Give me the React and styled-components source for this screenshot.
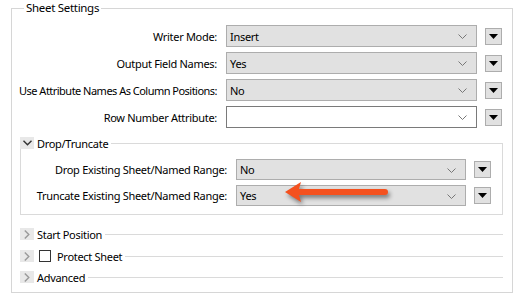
import styled, { createGlobalStyle } from "styled-components";

const GlobalStyle = createGlobalStyle`
  html, body {
    margin: 0;
    padding: 0;
    background: #ffffff;
  }
  body {
    font-family: "Noto Sans", "Open Sans", sans-serif;
    font-size: 11px;
    letter-spacing: -0.3px;
    color: #000;
  }
`;

const Page = styled.div`
  width: 521px;
  height: 299px;
  padding-left: 11px;
  box-sizing: border-box;
`;

const Outer = styled.fieldset`
  width: 502px;
  box-sizing: border-box;
  margin: 0;
  padding: 9px 9px 8px 8px;
  border: 1px solid #d6d6d6;
  min-width: 0;
`;

const Legend = styled.legend`
  padding: 0 2px;
  margin-left: 4px;
  line-height: 16px;
  height: 16px;
  font-size: 11.5px;
`;

const Rows = styled.div`
  display: flex;
  flex-direction: column;
  gap: ${(p) => p.$gap}px;
`;

const Row = styled.div`
  display: grid;
  grid-template-columns: ${(p) => p.$label}px ${(p) => p.$combo}px 17px;
  column-gap: 8px;
  align-items: center;
  height: ${(p) => p.$h}px;
`;

const Label = styled.div`
  display: flex;
  justify-content: flex-end;
  white-space: nowrap;
  margin-right: 1px;
  letter-spacing: ${(p) => (p.$tight ? "-0.52px" : "-0.3px")};
`;

const Combo = styled.div`
  position: relative;
  height: 100%;
  box-sizing: border-box;
  border: 1px solid ${(p) => (p.$empty ? "#7a7a7a" : "#adadad")};
  background: ${(p) => (p.$empty ? "#ffffff" : "#e1e1e1")};
  display: flex;
  align-items: center;
  padding-left: 3px;
  & > svg.chev {
    position: absolute;
    right: 9px;
    top: 50%;
    margin-top: -2px;
  }
`;

const MenuBtn = styled.div`
  width: 17px;
  height: 17px;
  box-sizing: border-box;
  border: 1px solid #adadad;
  background: #e1e1e1;
  display: flex;
  align-items: center;
  justify-content: center;
`;

const Arrow = styled.svg`
  position: absolute;
  left: 44px;
  top: -6px;
  overflow: visible;
  filter: drop-shadow(2px 3px 2px rgba(0, 0, 0, 0.45));
`;

const Header = styled.div`
  display: flex;
  align-items: center;
  height: 14px;
  margin-top: ${(p) => p.$mt}px;
  &::after {
    content: "";
    flex: 1;
    height: 1px;
    background: #dadada;
    margin-left: 3px;
  }
`;

const Toggle = styled.div`
  width: 14px;
  height: 12px;
  background: #e8e8e8;
  display: flex;
  align-items: center;
  justify-content: center;
  margin-right: 3px;
  flex: none;
`;

const Check = styled.div`
  width: 12px;
  height: 12px;
  box-sizing: border-box;
  border: 1px solid #333;
  background: #fff;
  margin: 0 6px 0 2px;
`;

const Group = styled.div`
  position: relative;
`;

const Body = styled.div`
  border: 1px solid #dadada;
  border-top: none;
  margin-top: -7px;
  padding: 16px 0 8px 0;
`;

const ExpandedHeader = styled(Header)`
  position: relative;
  z-index: 1;
`;

const Chevron = () => (
  <svg className="chev" width="9" height="5" viewBox="0 0 9 5">
    <path d="M0.5 0.5 L4.5 4.5 L8.5 0.5" fill="none" stroke="#777" strokeWidth="1" />
  </svg>
);

const Triangle = () => (
  <svg width="9" height="5" viewBox="0 0 9 5">
    <path d="M0 0 H9 L4.5 5 Z" fill="#000" />
  </svg>
);

const Down = () => (
  <svg width="9" height="6" viewBox="0 0 9 6">
    <path d="M0.5 0.8 L4.5 4.8 L8.5 0.8" fill="none" stroke="#333" strokeWidth="1.4" />
  </svg>
);

const Right = () => (
  <svg width="6" height="9" viewBox="0 0 6 9">
    <path d="M0.8 0.5 L4.8 4.5 L0.8 8.5" fill="none" stroke="#9a9a9a" strokeWidth="1.4" />
  </svg>
);

const Field = ({ label, value, empty, inner, tight, children }) => (
  <Row $label={inner ? 207 : 198} $combo={inner ? 230 : 251} $h={inner ? 21 : 22}>
    <Label $tight={tight}>{label}</Label>
    <Combo $empty={empty}>
      {value}
      <Chevron />
      {children}
    </Combo>
    <MenuBtn>
      <Triangle />
    </MenuBtn>
  </Row>
);

export default function App() {
  return (
    <Page>
      <GlobalStyle />
      <Outer>
        <Legend>Sheet Settings</Legend>
        <Rows $gap={5}>
          <Field label="Writer Mode:" value="Insert" />
          <Field label="Output Field Names:" value="Yes" />
          <Field label="Use Attribute Names As Column Positions:" value="No" tight />
          <Field label="Row Number Attribute:" value="" empty />
        </Rows>

        <Group>
          <ExpandedHeader $mt={8}>
            <Toggle>
              <Down />
            </Toggle>
            Drop/Truncate
          </ExpandedHeader>
          <Body>
            <Rows $gap={5}>
              <Field label="Drop Existing Sheet/Named Range:" value="No" inner />
              <Field label="Truncate Existing Sheet/Named Range:" value="Yes" inner>
                <Arrow width="110" height="24" viewBox="0 0 110 24">
                  <path d="M4 12 L20 2 L18 9 L104 9 A3 3 0 0 1 104 15 L18 15 L20 22 Z" fill="#f4511e" />
                </Arrow>
              </Field>
            </Rows>
          </Body>
        </Group>

        <Header $mt={12}>
          <Toggle>
            <Right />
          </Toggle>
          Start Position
        </Header>
        <Header $mt={8}>
          <Toggle>
            <Right />
          </Toggle>
          <Check />
          Protect Sheet
        </Header>
        <Header $mt={7}>
          <Toggle>
            <Right />
          </Toggle>
          Advanced
        </Header>
      </Outer>
    </Page>
  );
}
